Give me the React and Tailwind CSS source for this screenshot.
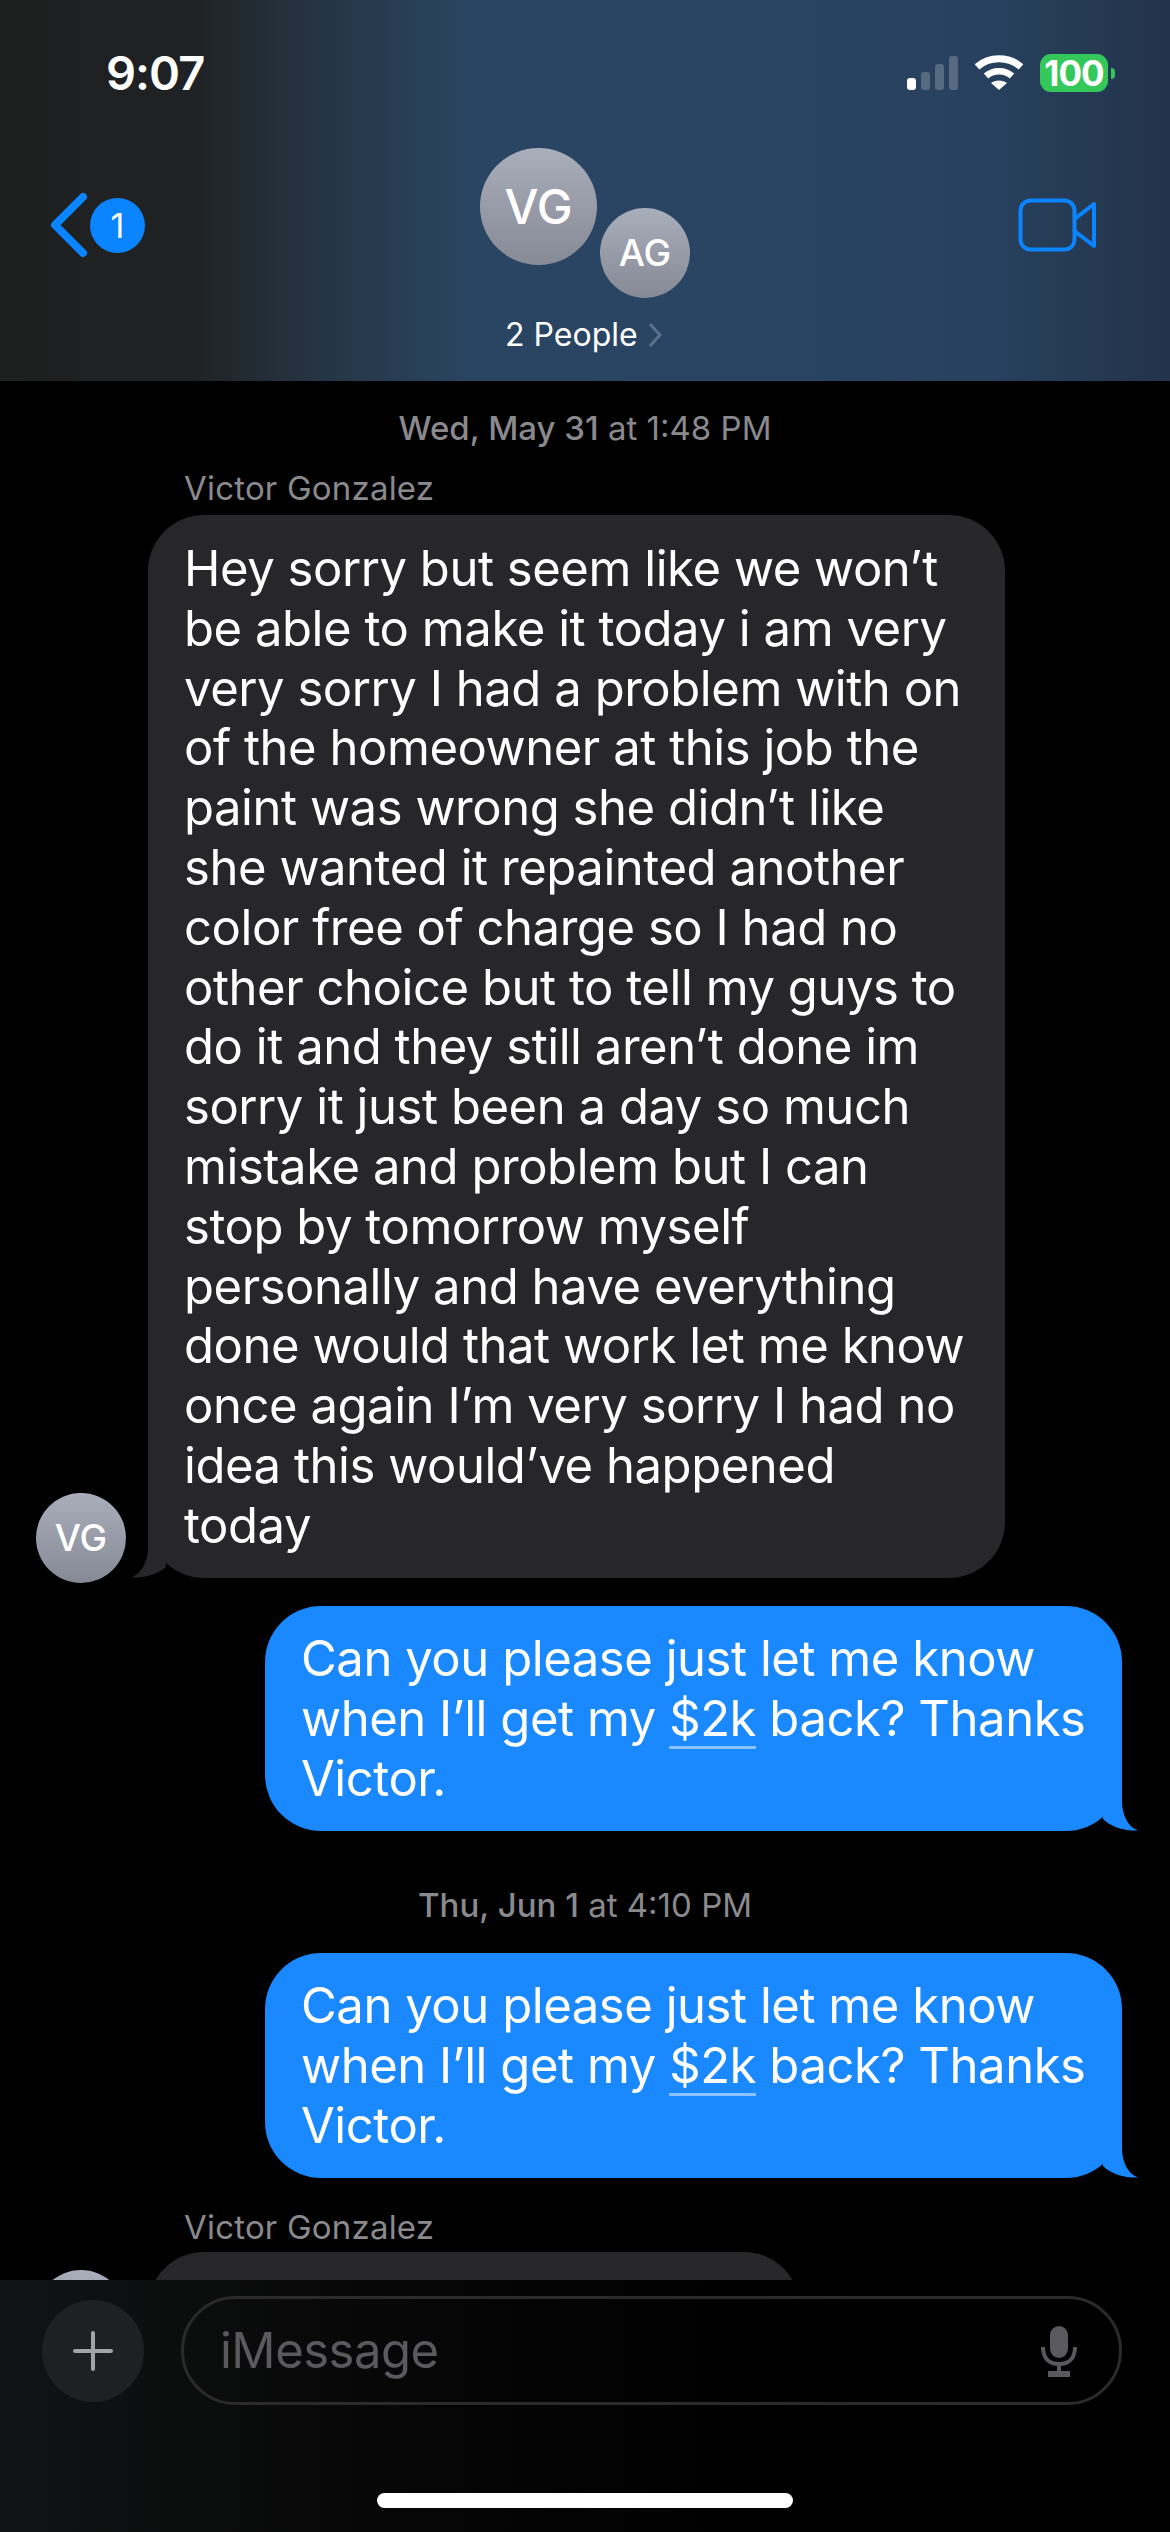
const sans = "font-['Inter','Liberation_Sans',sans-serif]";

const longMessage = [
  "Hey sorry but seem like we won’t",
  "be able to make it today i am very",
  "very sorry I had a problem with on",
  "of the homeowner at this job the",
  "paint was wrong she didn’t like",
  "she wanted it repainted another",
  "color free of charge so I had no",
  "other choice but to tell my guys to",
  "do it and they still aren’t done im",
  "sorry it just been a day so much",
  "mistake and problem but I can",
  "stop by tomorrow myself",
  "personally and have everything",
  "done would that work let me know",
  "once again I’m very sorry I had no",
  "idea this would’ve happened",
  "today",
];

function Avatar({ initials, className }) {
  return (
    <div className={`flex items-center justify-center rounded-full bg-gradient-to-b from-[#a9aebb] to-[#868a95] font-medium text-white ${className}`}>
      {initials}
    </div>
  );
}

function StatusBar() {
  return (
    <div className="flex h-[146px] items-center justify-between pl-[106px] pr-[55px]">
      <span className="text-[47px] font-semibold tracking-[-1px] text-white">9:07</span>
      <div className="flex items-center">
        <div className="flex h-[34px] items-end gap-[5px]">
          <div className="h-[12px] w-[9px] rounded-[3px] bg-white" />
          <div className="h-[18px] w-[9px] rounded-[3px] bg-[#566a82]" />
          <div className="h-[26px] w-[9px] rounded-[3px] bg-[#566a82]" />
          <div className="h-[34px] w-[9px] rounded-[3px] bg-[#566a82]" />
        </div>
        <svg className="ml-[17px] h-[36px] w-[48px]" viewBox="0 0 48 36" fill="none" stroke="white">
          <path d="M2 12C14 1 34 1 46 12" strokeWidth="7" />
          <path d="M11 21C18 14.500 30 14.500 37 21" strokeWidth="6.500" />
          <path d="M24 35L16 28C20 24.500 28 24.500 32 28Z" fill="white" stroke="none" />
        </svg>
        <div className="ml-[17px] flex h-[38px] w-[68px] items-center justify-center rounded-[11px] bg-[#34c759] text-[35px] font-bold tracking-[-1px] text-white">
          100
        </div>
        <div className="ml-[3px] h-[11px] w-[4px] rounded-r-full bg-[#34c759]" />
      </div>
    </div>
  );
}

function Header() {
  return (
    <header className="h-[381px] shrink-0 bg-[linear-gradient(to_right,#1e1f1f_0px,#1f2224_190px,#25323f_300px,#2a4562_470px,#294463_800px,#27405d_1000px,#23334a_1170px)]">
      <StatusBar />
      <div className="relative flex h-[235px] justify-between pl-[50px] pr-[72px]">
        <div className="flex h-[158px] items-center">
          <svg className="h-[66px] w-[40px]" viewBox="0 0 40 66" fill="none" stroke="#0a84ff" strokeWidth="8" strokeLinecap="round" strokeLinejoin="round">
            <path d="M33 5L5 33L33 61" />
          </svg>
          <div className="flex h-[55px] w-[55px] items-center justify-center rounded-full bg-[#0a84ff] text-[34px] text-white">1</div>
        </div>
        <div className="absolute left-[480px] top-[2px] w-[210px]">
          <div className="flex">
            <Avatar initials="VG" className="h-[117px] w-[117px] text-[48px]" />
            <Avatar initials="AG" className="ml-[3px] mt-[60px] h-[90px] w-[90px] text-[37px]" />
          </div>
        </div>
        <div className="absolute left-[505px] top-[169px] flex items-center text-[32px] leading-[40px] text-white">
          2 People
          <svg className="ml-[10px] h-[26px] w-[14px]" viewBox="0 0 14 26" fill="none" stroke="#5c708a" strokeWidth="3">
            <path d="M2 2L12 13L2 24" />
          </svg>
        </div>
        <svg className="mt-[52px] h-[54px] w-[80px]" viewBox="0 0 80 54" fill="none" stroke="#0a84ff" strokeWidth="4" strokeLinejoin="round">
          <rect x="2.500" y="2.500" width="54" height="49" rx="10" />
          <path d="M56.500 21L76 6V48L56.500 33" />
        </svg>
      </div>
    </header>
  );
}

function TimeStamp({ day, time, className }) {
  return (
    <p className={`text-center text-[33px] leading-[40px] text-[#8a8a8e] ${className}`}>
      <span className="font-medium">{day}</span> {time}
    </p>
  );
}

function SentBubble({ className }) {
  return (
    <div className={`relative ml-[265px] w-[857px] rounded-[56px] bg-[#1a88ff] pb-[22px] pl-[36px] pt-[23px] text-[49px] leading-[60px] tracking-[-0.45px] text-white ${className}`}>
      <div>Can you please just let me know</div>
      <div>
        when I’ll get my <span className="underline decoration-[#8cc2ff] decoration-[3px] underline-offset-[10px]">$2k</span> back? Thanks
      </div>
      <div>Victor.</div>
      {/* tail also squares off the rounded corner above it */}
      <svg className="absolute -right-[16px] bottom-0 h-[60px] w-[40px]" viewBox="0 0 40 60" fill="#1a88ff">
        <path d="M24 0V30C24 44 30 56 40 59.500C28 60 14 57 5 48V0Z" />
      </svg>
    </div>
  );
}

function Thread() {
  return (
    <main className="flex-1 overflow-hidden">
      <TimeStamp day="Wed, May 31" time="at 1:48 PM" className="mt-[27px]" />
      <p className="ml-[184px] mt-[20px] text-[33px] leading-[40px] tracking-[0.2px] text-[#8a8a8e]">Victor Gonzalez</p>
      <div className="relative mt-[7px]">
        <Avatar initials="VG" className="absolute bottom-[-5px] left-[36px] h-[90px] w-[90px] text-[37px]" />
        <div className="relative ml-[148px] w-[857px] rounded-[56px] bg-[#272729] pb-[22px] pl-[36px] pt-[24px] text-[49px] leading-[59.800px] tracking-[-0.45px] text-white">
          {longMessage.map((line) => (
            <div key={line} className="whitespace-nowrap">{line}</div>
          ))}
          <svg className="absolute -left-[17px] bottom-0 h-[60px] w-[40px]" viewBox="0 0 40 60" fill="#272729">
            <path d="M17 0V30C17 44 10 56 0 59.500C12 60 26 57 35 49V0Z" />
          </svg>
        </div>
      </div>
      <SentBubble className="mt-[28px]" />
      <TimeStamp day="Thu, Jun 1" time="at 4:10 PM" className="mt-[54px]" />
      <SentBubble className="mt-[28px]" />
      <p className="ml-[184px] mt-[29px] text-[33px] leading-[40px] tracking-[0.2px] text-[#8a8a8e]">Victor Gonzalez</p>
      <div className="relative ml-[148px] mt-[5px] h-[200px] w-[652px] rounded-[56px] bg-[#272729]">
        <div className="absolute -left-[112px] top-[18px] h-[90px] w-[90px] rounded-full bg-gradient-to-b from-[#a9aebb] to-[#868a95]" />
      </div>
    </main>
  );
}

function Composer() {
  return (
    <footer className="absolute inset-x-0 bottom-0 h-[252px] bg-gradient-to-r from-[#121314] via-[#030303] to-black">
      <div className="flex items-center pl-[42px] pr-[48px] pt-[16px]">
        <div className="flex h-[102px] w-[102px] items-center justify-center rounded-full bg-[#1f2022]">
          <svg className="h-[40px] w-[40px]" viewBox="0 0 40 40" stroke="#a3a4a8" strokeLinecap="round" strokeWidth="4">
            <path d="M20 2V38M2 20H38" />
          </svg>
        </div>
        <div className="ml-[37px] flex h-[109px] flex-1 items-center justify-between rounded-full border-[3px] border-[#2b2b2d] pl-[36px] pr-[42px]">
          <span className="text-[49px] tracking-[-0.5px] text-[#59595e]">iMessage</span>
          <svg className="h-[52px] w-[36px]" viewBox="0 0 36 52" fill="none" stroke="#59595e" strokeWidth="4">
            <rect x="9" y="1" width="18" height="32" rx="9" fill="#59595e" stroke="none" />
            <path d="M2 22C2 34 9 39 18 39C27 39 34 34 34 22M18 39V48" />
            <path d="M7 49H29" strokeWidth="6" />
          </svg>
        </div>
      </div>
      <div className="mx-auto mt-[88px] h-[15px] w-[416px] rounded-full bg-white" />
    </footer>
  );
}

export default function App() {
  return (
    <div className={`relative flex h-[2532px] w-[1170px] flex-col overflow-hidden bg-black ${sans}`}>
      <Header />
      <Thread />
      <Composer />
    </div>
  );
}
